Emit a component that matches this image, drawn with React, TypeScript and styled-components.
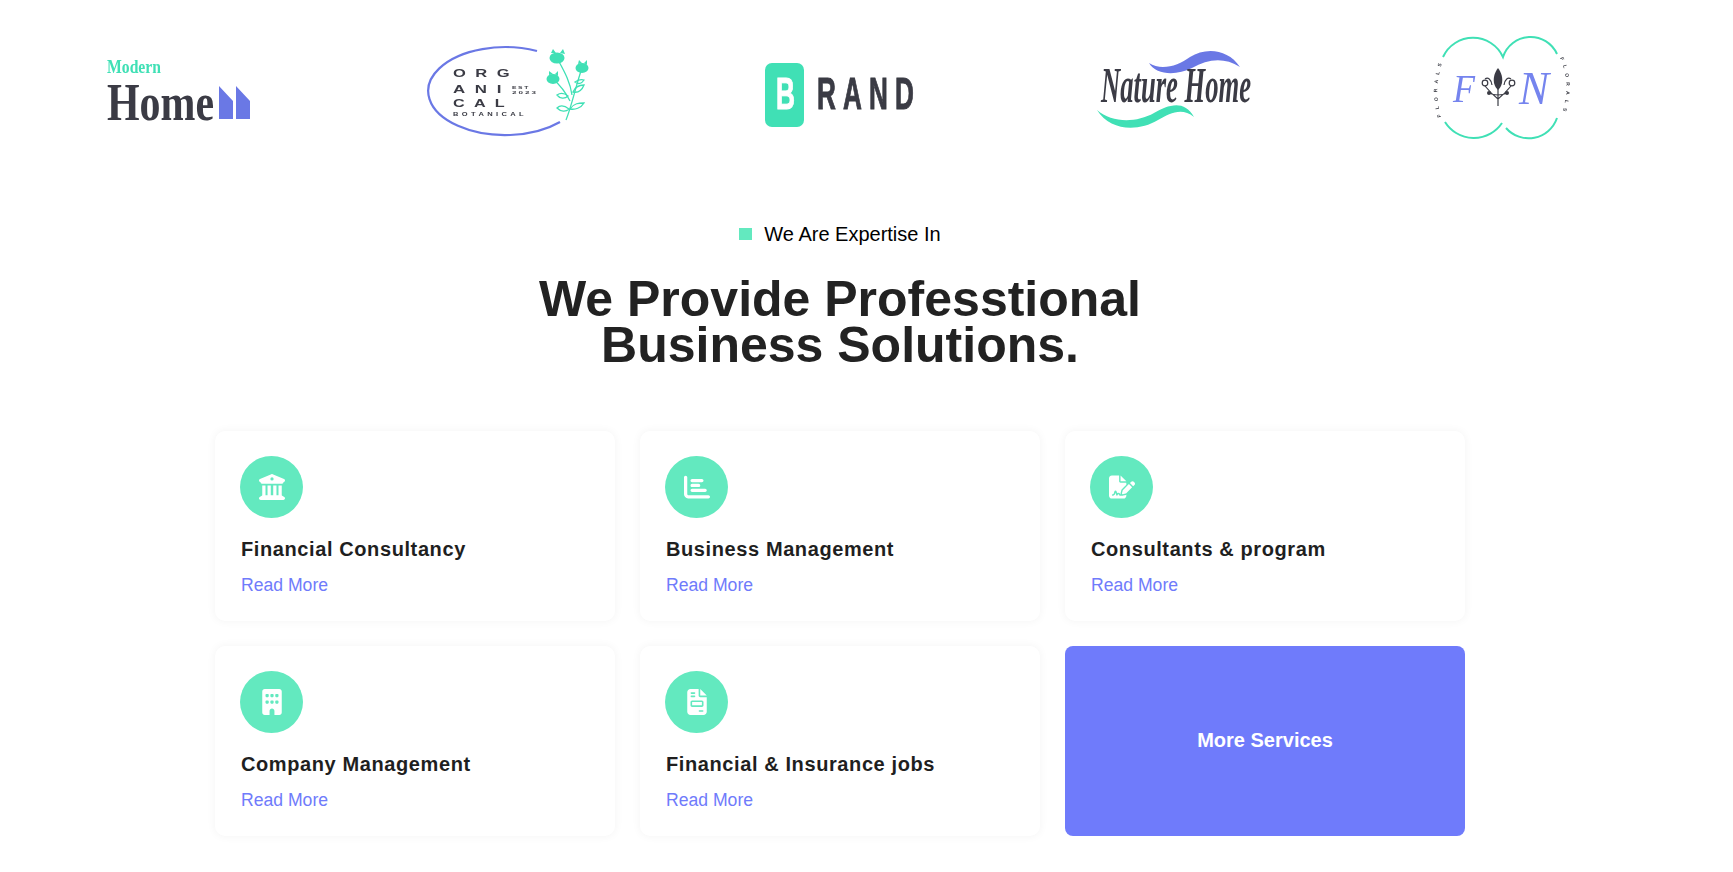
import React from "react";
import styled, { createGlobalStyle } from "styled-components";
import {
  FaBuilding,
  FaBuildingColumns,
  FaChartBar,
  FaFileInvoice,
  FaFileSignature,
} from "react-icons/fa6";

const TEAL = "#3fe0b5";
const INDIGO = "#6b78e5";
const INK = "#3a3b44";

const GlobalStyle = createGlobalStyle`
  html, body {
    margin: 0;
    padding: 0;
    background: #fff;
    overflow: hidden;
  }
  body {
    font-family: "Liberation Sans", Arial, sans-serif;
  }
`;

const Page = styled.div`
  width: 1680px;
  height: 872px;
`;

const LogoRow = styled.div`
  display: grid;
  grid-template-columns: repeat(5, 331px);
  justify-content: center;
  padding-top: 33px;
`;

const LogoSlot = styled.div`
  display: flex;
  justify-content: center;
  height: 110px;
`;

const LogoSvg = styled.svg`
  width: 170px;
  height: 110px;
  display: block;
  overflow: visible;
`;

const Heading = styled.div`
  display: flex;
  flex-direction: column;
  align-items: center;
  padding-top: 79px;
`;

const Eyebrow = styled.div`
  display: flex;
  align-items: center;
  gap: 12px;
  font-size: 20px;
  line-height: 24px;
  color: #000;
`;

const EyebrowMark = styled.span`
  width: 13px;
  height: 12px;
  background: #63e9bf;
`;

const Title = styled.h2`
  margin: 30px 0 0;
  font-size: 50px;
  line-height: 46px;
  font-weight: 700;
  color: #222;
  text-align: center;
`;

const CardGrid = styled.div`
  display: grid;
  grid-template-columns: repeat(3, 400px);
  grid-auto-rows: 190px;
  gap: 24.5px 25px;
  justify-content: center;
  margin-top: 63px;
`;

const Card = styled.div`
  box-sizing: border-box;
  padding: 25px 25px 0;
  background: #fff;
  border-radius: 10px;
  box-shadow: 0 0 10px rgba(0, 0, 0, 0.05);
`;

const IconCircle = styled.div`
  width: 63px;
  height: 62px;
  border-radius: 50%;
  background: #63e9bf;
  color: #fff;
  display: flex;
  align-items: center;
  justify-content: center;
  font-size: 26px;
`;

const CardTitle = styled.h3`
  margin: 19px 0 0 1px;
  font-size: 20px;
  line-height: 24px;
  font-weight: 700;
  letter-spacing: 0.6px;
  color: #1f1f1f;
`;

const ReadMore = styled.a`
  display: block;
  margin: 12px 0 0 1px;
  font-size: 17.6px;
  line-height: 24px;
  color: #6f7bfb;
`;

const MoreCard = styled.a`
  display: flex;
  align-items: center;
  justify-content: center;
  border-radius: 8px;
  background: #6f7bfb;
  color: #fff;
  font-size: 20px;
  font-weight: 700;
`;

const LogoBlur = ({ id }: { id: string }) => (
  <defs>
    <filter id={id} x="-10%" y="-10%" width="120%" height="120%">
      <feGaussianBlur stdDeviation="0.5" />
    </filter>
  </defs>
);

const ModernHomeLogo = () => (
  <LogoSvg viewBox="0 0 170 110">
    <LogoBlur id="blurHome" />
    <g filter="url(#blurHome)">
      <text
        x="14"
        y="40"
        fill={TEAL}
        fontFamily="Liberation Serif, serif"
        fontWeight="700"
        fontSize="18"
        textLength="54"
        lengthAdjust="spacingAndGlyphs"
      >
        Modern
      </text>
      <text
        x="14"
        y="87"
        fill={INK}
        fontFamily="Liberation Serif, serif"
        fontWeight="700"
        fontSize="52"
        textLength="107"
        lengthAdjust="spacingAndGlyphs"
      >
        Home
      </text>
      <path d="M126 53 140 68V86H126Z M143 53 157 68V86H143Z" fill={INDIGO} />
    </g>
  </LogoSvg>
);

const OrganicLogo = () => {
  const letters = {
    fill: INK,
    fontFamily: "Liberation Sans, sans-serif",
    fontWeight: 700,
    lengthAdjust: "spacingAndGlyphs",
  };
  return (
    <LogoSvg viewBox="0 0 170 110">
      <LogoBlur id="blurOrganic" />
      <g filter="url(#blurOrganic)">
        <path
          d="M113 18A77 44 0 1 0 136 89"
          fill="none"
          stroke={INDIGO}
          strokeWidth="2.2"
        />
        <text {...letters} x="29" y="44" fontSize="10.5" letterSpacing="6" textLength="66">
          ORG
        </text>
        <text {...letters} x="29" y="60" fontSize="10.5" letterSpacing="6" textLength="58">
          ANI
        </text>
        <text {...letters} x="29" y="74" fontSize="10.5" letterSpacing="6" textLength="61">
          CAL
        </text>
        <text {...letters} x="29" y="83" fontSize="4.5" letterSpacing="2" textLength="74">
          BOTANICAL
        </text>
        <text {...letters} x="88" y="56" fontSize="4" letterSpacing="1" textLength="18">
          EST
        </text>
        <text {...letters} x="88" y="61" fontSize="4" letterSpacing="1" textLength="26">
          2023
        </text>
        <g fill="none" stroke={TEAL} strokeWidth="1.3">
          <path d="M142 87C148 72 152 52 158 35" />
          <path d="M148 62C146 48 140 38 133 25" />
          <path d="M146 68C142 60 136 52 129 46" />
          <path d="M145 76C140 72 136 72 133 75 137 79 142 79 145 76Z" />
          <path d="M146 76C150 70 155 70 160 70 157 75 151 77 146 76Z" />
          <path d="M149 59C151 54 156 52 160 52 158 57 154 60 149 59Z" />
          <path d="M144 63C139 59 136 60 133 62 136 66 141 66 144 63Z" />
          <path d="M151 49C154 47 157 46 160 47 158 50 155 52 151 49Z" />
        </g>
        <g fill={TEAL}>
          <ellipse cx="133" cy="25" rx="7.5" ry="5.5" />
          <ellipse cx="158" cy="35" rx="6.5" ry="5" />
          <ellipse cx="129" cy="46" rx="6.5" ry="5" />
          <path d="M127 20 129 16 132 20ZM136 20 139 16 141 21ZM154 31 155 27 158 30ZM160 30 163 27 163 32ZM125 42 125 38 129 41ZM131 41 134 38 134 43Z" />
        </g>
      </g>
    </LogoSvg>
  );
};

const BrandLogo = () => (
  <LogoSvg viewBox="0 0 170 110">
    <LogoBlur id="blurBrand" />
    <g filter="url(#blurBrand)">
      <rect x="10" y="30" width="39" height="64" rx="7" fill={TEAL} />
      <text
        x="21"
        y="76"
        fill="#fff"
        stroke="#fff"
        strokeWidth="1"
        fontFamily="Liberation Sans, sans-serif"
        fontWeight="700"
        fontSize="44"
        textLength="19"
        lengthAdjust="spacingAndGlyphs"
      >
        B
      </text>
      <text
        x="62"
        y="76"
        fill={INK}
        stroke={INK}
        strokeWidth="1"
        fontFamily="Liberation Sans, sans-serif"
        fontWeight="700"
        fontSize="44"
        letterSpacing="12"
        textLength="104"
        lengthAdjust="spacingAndGlyphs"
      >
        RAND
      </text>
    </g>
  </LogoSvg>
);

const NatureHomeLogo = () => (
  <LogoSvg viewBox="0 0 170 110">
    <LogoBlur id="blurNature" />
    <g filter="url(#blurNature)">
      <path
        d="M63 30C75 38 92 33 104 24 120 14 142 16 154 34 138 24 122 26 106 35 90 43 70 42 63 30Z"
        fill={INDIGO}
      />
      <text
        x="15"
        y="69"
        fill={INK}
        fontFamily="Liberation Serif, serif"
        fontStyle="italic"
        fontWeight="700"
        fontSize="50"
        textLength="150"
        lengthAdjust="spacingAndGlyphs"
      >
        Nature Home
      </text>
      <path
        d="M11 77C26 90 50 90 68 80 82 72 98 66 108 84 96 74 84 80 72 87 52 99 24 98 11 77Z"
        fill={TEAL}
      />
    </g>
  </LogoSvg>
);

const FloralsLogo = () => {
  const sideLabel = {
    fill: INK,
    fontFamily: "Liberation Sans, sans-serif",
    fontWeight: 700,
    fontSize: 5,
  };
  return (
    <LogoSvg viewBox="0 0 170 110">
      <LogoBlur id="blurFlorals" />
      <defs>
        <path id="floralsLeft" d="M24 84C19 66 19 48 25 30" />
        <path id="floralsRight" d="M143 25C151 42 151 62 145 80" />
      </defs>
      <g filter="url(#blurFlorals)">
        <path
          d="M26 24A33 33 0 0 1 86 24 29 29 0 0 1 140 21M28 89A34 34 0 0 0 85 90M89 95A30 30 0 0 0 140 85"
          fill="none"
          stroke={TEAL}
          strokeWidth="2"
        />
        <text {...sideLabel}>
          <textPath href="#floralsLeft" textLength="54">
            FLORALS
          </textPath>
        </text>
        <text {...sideLabel}>
          <textPath href="#floralsRight" textLength="54">
            FLORALS
          </textPath>
        </text>
        <text
          x="36"
          y="69"
          fill="#7584ee"
          fontFamily="Liberation Serif, serif"
          fontStyle="italic"
          fontSize="40"
          textLength="22"
          lengthAdjust="spacingAndGlyphs"
        >
          F
        </text>
        <text
          x="102"
          y="71"
          fill="#7584ee"
          fontFamily="Liberation Serif, serif"
          fontStyle="italic"
          fontSize="46"
          textLength="30"
          lengthAdjust="spacingAndGlyphs"
        >
          N
        </text>
        <path
          d="M81 35C84 39 86 44 85 50 84 54 82 56 81 57 80 56 78 54 77 50 76 44 78 39 81 35Z"
          fill={INK}
        />
        <path
          d="M81 55V73M81 66C76 62 72 58 68 53M81 66C86 62 90 58 94 53M81 62C77 62 74 61 72 60M81 62C85 62 88 61 90 60M75 52C74 46 71 44 68 46M87 52C88 46 91 44 94 46"
          fill="none"
          stroke={INK}
          strokeWidth="1.2"
        />
        <circle cx="68" cy="50" r="2.8" fill="none" stroke={INK} strokeWidth="1.2" />
        <circle cx="95" cy="50" r="2.8" fill="none" stroke={INK} strokeWidth="1.2" />
        <circle cx="72" cy="60" r="2" fill={INK} />
        <circle cx="90" cy="60" r="2" fill={INK} />
      </g>
    </LogoSvg>
  );
};

const services = [
  { title: "Financial Consultancy", icon: <FaBuildingColumns /> },
  { title: "Business Management", icon: <FaChartBar /> },
  { title: "Consultants & program", icon: <FaFileSignature /> },
  { title: "Company Management", icon: <FaBuilding /> },
  { title: "Financial & Insurance jobs", icon: <FaFileInvoice /> },
];

const App: React.FC = () => (
  <Page>
    <GlobalStyle />
    <LogoRow>
      <LogoSlot>
        <ModernHomeLogo />
      </LogoSlot>
      <LogoSlot>
        <OrganicLogo />
      </LogoSlot>
      <LogoSlot>
        <BrandLogo />
      </LogoSlot>
      <LogoSlot>
        <NatureHomeLogo />
      </LogoSlot>
      <LogoSlot>
        <FloralsLogo />
      </LogoSlot>
    </LogoRow>

    <Heading>
      <Eyebrow>
        <EyebrowMark />
        We Are Expertise In
      </Eyebrow>
      <Title>
        We Provide Professtional
        <br />
        Business Solutions.
      </Title>
    </Heading>

    <CardGrid>
      {services.map((service) => (
        <Card key={service.title}>
          <IconCircle>{service.icon}</IconCircle>
          <CardTitle>{service.title}</CardTitle>
          <ReadMore>Read More</ReadMore>
        </Card>
      ))}
      <MoreCard>More Services</MoreCard>
    </CardGrid>
  </Page>
);

export default App;
